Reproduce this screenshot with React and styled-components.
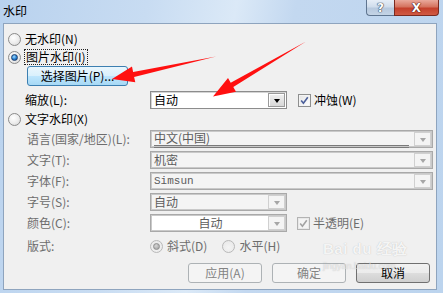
import React from "react";
import styled, { createGlobalStyle, css } from "styled-components";

const Global = createGlobalStyle`
  html, body { margin: 0; padding: 0; background: #c4d9ef; }
  body { font-family: "Noto Sans CJK SC", "Noto Sans", sans-serif; font-size: 12px; color: #000; }
  * { box-sizing: border-box; }
`;

const Window = styled.div`
  position: relative;
  width: 443px;
  height: 293px;
  overflow: hidden;
  display: flex;
  flex-direction: column;
  background: linear-gradient(100deg, #b9d2ee 0%, #c8dcf2 30%, #dbe9f7 48%, #c3d8f0 60%, #bcd4ee 100%);
`;

const TitleBar = styled.div`
  height: 23px;
  display: flex;
  align-items: flex-start;
  padding-left: 3px;
  flex-shrink: 0;
`;

const TitleText = styled.div`
  font-size: 12px;
  line-height: 12px;
  margin-top: 5px;
  color: #000;
`;

const CaptionButtons = styled.div`
  margin-left: auto;
  margin-right: 4px;
  display: flex;
`;

const CapBtn = styled.div`
  height: 16px;
  display: flex;
  align-items: center;
  justify-content: center;
  font-family: "DejaVu Sans", sans-serif;
  font-weight: bold;
  color: #fff;
  ${(p) =>
    p.$close
      ? css`
          width: 45px;
          border: 1px solid #7a2a20;
          border-top: none;
          border-radius: 0 0 4px 0;
          background: linear-gradient(#e9a99c 0%, #d5735f 45%, #c4402c 55%, #d05a43 100%);
          font-size: 12px;
          text-shadow: 0 0 1px #4a1410, 0 0 1px #4a1410, 0 0 1px #4a1410;
        `
      : css`
          width: 28px;
          border: 1px solid #5f7590;
          border-top: none;
          border-right: none;
          border-radius: 0 0 0 4px;
          background: linear-gradient(#e6eef7 0%, #d0ddec 45%, #b7c9de 55%, #c4d4e6 100%);
          font-size: 12px;
          text-shadow: 0 0 1px #2f3e52, 0 0 1px #2f3e52, 0 0 1px #2f3e52;
        `}
`;

const Panel = styled.div`
  flex: 1;
  margin: 0 6px 3px 3px;
  border: 1px solid #8ea4be;
  background: #f0f0f0;
  display: flex;
  flex-direction: column;
  padding: 7px 3px 0 4px;
`;

const RadioRow = styled.div`
  display: flex;
  align-items: center;
  height: 16px;
  gap: ${(p) => (p.$gap ?? 4)}px;
  margin-top: ${(p) => p.$mt || 0}px;
  margin-left: ${(p) => p.$ml || 0}px;
`;

const RadioCircle = styled.span`
  position: relative;
  width: 13px;
  height: 13px;
  border-radius: 50%;
  flex-shrink: 0;
  border: 1px solid ${(p) => (p.$disabled ? "#b9b9b9" : "#8b8b8b")};
  background: ${(p) =>
    p.$disabled
      ? "radial-gradient(circle at 50% 60%, #f4f4f4 0%, #e6e6e6 100%)"
      : "radial-gradient(circle at 40% 35%, #ffffff 0%, #ececec 55%, #cfcfcf 100%)"};
  &::after {
    content: "";
    display: ${(p) => (p.$checked ? "block" : "none")};
    position: absolute;
    left: 2px;
    top: 2px;
    width: 7px;
    height: 7px;
    border-radius: 50%;
    background: ${(p) =>
      p.$disabled
        ? "radial-gradient(circle at 40% 35%, #d6d6d6 0%, #9a9a9a 100%)"
        : "radial-gradient(circle at 40% 35%, #a5dcff 0%, #2b86d6 50%, #0c3f86 100%)"};
    border: 1px solid ${(p) => (p.$disabled ? "#8e8e8e" : "#1d3f6d")};
    box-sizing: border-box;
  }
`;

const Label = styled.span`
  font-size: 12px;
  line-height: 14px;
  white-space: nowrap;
  color: ${(p) => (p.$disabled ? "#6d6d6d" : "#000")};
  ${(p) =>
    p.$focus &&
    css`
      border: 1px dotted #222;
      padding: 0 1px;
    `}
`;

const PushButton = styled.div`
  display: flex;
  align-items: center;
  justify-content: center;
  height: 20px;
  width: ${(p) => p.$w}px;
  margin-left: ${(p) => p.$ml || 0}px;
  margin-top: ${(p) => p.$mt || 0}px;
  border-radius: 3px;
  font-size: 12px;
  line-height: 14px;
  ${(p) =>
    p.$variant === "hover"
      ? css`
          border: 1px solid #3c7fb1;
          background: linear-gradient(#eaf6fd 0%, #d9f0fc 49%, #bee6fd 51%, #a7d9f5 100%);
          color: #000;
        `
      : p.$variant === "disabled"
      ? css`
          border: 1px solid #adb2b5;
          background: #f4f4f4;
          color: #838383;
        `
      : css`
          border: 1px solid #707070;
          background: linear-gradient(#f2f2f2 0%, #ebebeb 49%, #dddddd 51%, #cfcfcf 100%);
          color: #000;
        `}
`;

const FieldRow = styled.div`
  display: flex;
  align-items: center;
  height: 18px;
  padding-left: ${(p) => p.$indent}px;
  margin-top: ${(p) => p.$mt || 0}px;
`;

const FieldLabel = styled.span`
  width: ${(p) => p.$w}px;
  flex-shrink: 0;
  font-size: 12px;
  line-height: 14px;
  white-space: nowrap;
  color: ${(p) => (p.$disabled ? "#6d6d6d" : "#000")};
`;

const TextSection = styled.div`
  display: flex;
  flex-direction: column;
  gap: 3px;
  margin-top: 3px;
`;

const Combo = styled.div`
  display: flex;
  width: ${(p) => p.$w}px;
  height: 18px;
  flex-shrink: 0;
  ${(p) =>
    p.$disabled
      ? css`
          border: 1px solid #a9a9a9;
          box-shadow: inset 0 0 0 1px #c9c9c9;
          background: ${p.$white ? "#ffffff" : "#f4f4f4"};
        `
      : css`
          border: 1px solid #8c8c8c;
          box-shadow: inset 1px 1px 0 #d4d4d4;
          background: #ffffff;
        `}
`;

const ComboText = styled.div`
  flex: 1;
  display: flex;
  align-items: center;
  padding-left: 3px;
  font-size: 12px;
  line-height: 14px;
  white-space: nowrap;
  justify-content: ${(p) => (p.$center ? "center" : "flex-start")};
  color: ${(p) => (p.$disabled ? "#5c5c5c" : "#000")};
  ${(p) => p.$mono && css`font-family: "Liberation Mono", monospace; font-size: 11px;`}
`;

const Underlined = styled.span`
  display: block;
  width: 100%;
  margin-right: 4px;
  border-bottom: 3px double #7a7a7a;
  line-height: 14px;
  margin-top: 1px;
`;

const DropBtn = styled.div`
  width: 17px;
  flex-shrink: 0;
  margin: 1px;
  display: flex;
  align-items: center;
  justify-content: center;
  padding-top: 2px;
  ${(p) =>
    p.$disabled
      ? css`
          background: #f4f4f4;
          border: 1px solid #d0d0d0;
        `
      : css`
          background: linear-gradient(#f0f0f0, #d8d8d8);
          border: 1px solid #9a9a9a;
          box-shadow: inset 1px 1px 0 #ffffff;
        `}
  &::after {
    content: "";
    border-left: 3.5px solid transparent;
    border-right: 3.5px solid transparent;
    border-top: 4px solid ${(p) => (p.$disabled ? "#a6a6a6" : "#000")};
  }
`;

const CheckGroup = styled.div`
  display: flex;
  align-items: center;
  gap: 3px;
  margin-left: ${(p) => p.$ml}px;
`;

const CheckBox = styled.span`
  width: 13px;
  height: 13px;
  flex-shrink: 0;
  display: flex;
  align-items: center;
  justify-content: center;
  border: 1px solid ${(p) => (p.$disabled ? "#b3b3b3" : "#8e8f8f")};
  background: ${(p) =>
    p.$disabled ? "#f4f4f4" : "linear-gradient(135deg, #e4e4e4 0%, #ffffff 100%)"};
  box-shadow: inset 0 0 0 1px ${(p) => (p.$disabled ? "#e8e8e8" : "#f4f4f4")};
`;

const ButtonRow = styled.div`
  display: flex;
  justify-content: flex-end;
  gap: 10px;
  margin-top: 8px;
  padding-right: 3px;
`;

const Overlay = styled.svg`
  position: absolute;
  left: 0;
  top: 0;
  width: 443px;
  height: 293px;
  pointer-events: none;
`;

const Watermark = styled.div`
  position: absolute;
  left: 323px;
  top: 240px;
  pointer-events: none;
  color: rgba(255, 255, 255, 0.85);
  text-shadow: 0 0 1px rgba(150, 150, 150, 0.6);
  display: flex;
  flex-direction: column;
  align-items: flex-start;
`;

const WmTop = styled.div`
  font-family: "Liberation Sans", sans-serif;
  font-weight: bold;
  font-size: 15px;
  line-height: 18px;
  letter-spacing: 0.5px;
`;

const WmBottom = styled.div`
  font-family: "Liberation Sans", sans-serif;
  font-size: 9px;
  line-height: 10px;
  margin-top: 3px;
  color: rgba(255, 255, 255, 0.55);
`;

function Radio({ checked, disabled }) {
  return <RadioCircle $checked={checked} $disabled={disabled} />;
}

function Check({ disabled }) {
  return (
    <CheckBox $disabled={disabled}>
      <svg width="9" height="9" viewBox="0 0 9 9">
        <path
          d="M1.2 4.6 L3.4 7.2 L7.8 1.2"
          fill="none"
          stroke={disabled ? "#a2a2a2" : "#4b5f9a"}
          strokeWidth="1.6"
        />
      </svg>
    </CheckBox>
  );
}

export default function App() {
  return (
    <>
      <Global />
      <Window>
        <TitleBar>
          <TitleText>水印</TitleText>
          <CaptionButtons>
            <CapBtn>?</CapBtn>
            <CapBtn $close>X</CapBtn>
          </CaptionButtons>
        </TitleBar>
        <Panel>
          <RadioRow>
            <Radio />
            <Label>无水印(N)</Label>
          </RadioRow>
          <RadioRow $mt={2} $gap={3}>
            <Radio checked />
            <Label $focus>图片水印(I)</Label>
          </RadioRow>
          <PushButton $variant="hover" $w={101} $ml={19} $mt={1}>
            选择图片(P)...
          </PushButton>
          <FieldRow $indent={17} $mt={5}>
            <FieldLabel $w={125}>缩放(L):</FieldLabel>
            <Combo $w={137}>
              <ComboText>自动</ComboText>
              <DropBtn />
            </Combo>
            <CheckGroup $ml={11}>
              <Check />
              <Label>冲蚀(W)</Label>
            </CheckGroup>
          </FieldRow>
          <RadioRow $mt={2}>
            <Radio />
            <Label>文字水印(X)</Label>
          </RadioRow>
          <TextSection>
            <FieldRow $indent={19}>
              <FieldLabel $w={123} $disabled>语言(国家/地区)(L):</FieldLabel>
              <Combo $w={283} $disabled>
                <ComboText $disabled>
                  <Underlined>中文(中国)</Underlined>
                </ComboText>
                <DropBtn $disabled />
              </Combo>
            </FieldRow>
            <FieldRow $indent={19}>
              <FieldLabel $w={123} $disabled>文字(T):</FieldLabel>
              <Combo $w={283} $disabled>
                <ComboText $disabled>机密</ComboText>
                <DropBtn $disabled />
              </Combo>
            </FieldRow>
            <FieldRow $indent={19}>
              <FieldLabel $w={123} $disabled>字体(F):</FieldLabel>
              <Combo $w={283} $disabled>
                <ComboText $disabled $mono>Simsun</ComboText>
                <DropBtn $disabled />
              </Combo>
            </FieldRow>
            <FieldRow $indent={19}>
              <FieldLabel $w={123} $disabled>字号(S):</FieldLabel>
              <Combo $w={137} $disabled>
                <ComboText $disabled>自动</ComboText>
                <DropBtn $disabled />
              </Combo>
            </FieldRow>
            <FieldRow $indent={19}>
              <FieldLabel $w={123} $disabled>颜色(C):</FieldLabel>
              <Combo $w={137} $disabled $white>
                <ComboText $disabled $center>自动</ComboText>
                <DropBtn $disabled />
              </Combo>
              <CheckGroup $ml={10}>
                <Check disabled />
                <Label $disabled>半透明(E)</Label>
              </CheckGroup>
            </FieldRow>
          </TextSection>
          <FieldRow $indent={19} $mt={5}>
            <FieldLabel $w={123} $disabled>版式:</FieldLabel>
            <RadioRow>
              <Radio checked disabled />
              <Label $disabled>斜式(D)</Label>
            </RadioRow>
            <RadioRow $ml={15}>
              <Radio disabled />
              <Label $disabled>水平(H)</Label>
            </RadioRow>
          </FieldRow>
          <ButtonRow>
            <PushButton $variant="disabled" $w={74}>应用(A)</PushButton>
            <PushButton $variant="disabled" $w={74}>确定</PushButton>
            <PushButton $w={74}>取消</PushButton>
          </ButtonRow>
        </Panel>
        <Watermark>
          <WmTop>Bai du 经验</WmTop>
          <WmBottom>jingyan.baidu.com</WmBottom>
        </Watermark>
        <Overlay viewBox="0 0 443 293">
          <polygon
            points="216,56.5 134.1,76.9 135.3,82.2 112,79 132,66.6 133.1,72"
            fill="#ff1010"
          />
          <polygon
            points="306,41.5 233.3,87.1 236,91.8 213,96.5 228,78 230.7,82.7"
            fill="#ff1010"
          />
        </Overlay>
      </Window>
    </>
  );
}
